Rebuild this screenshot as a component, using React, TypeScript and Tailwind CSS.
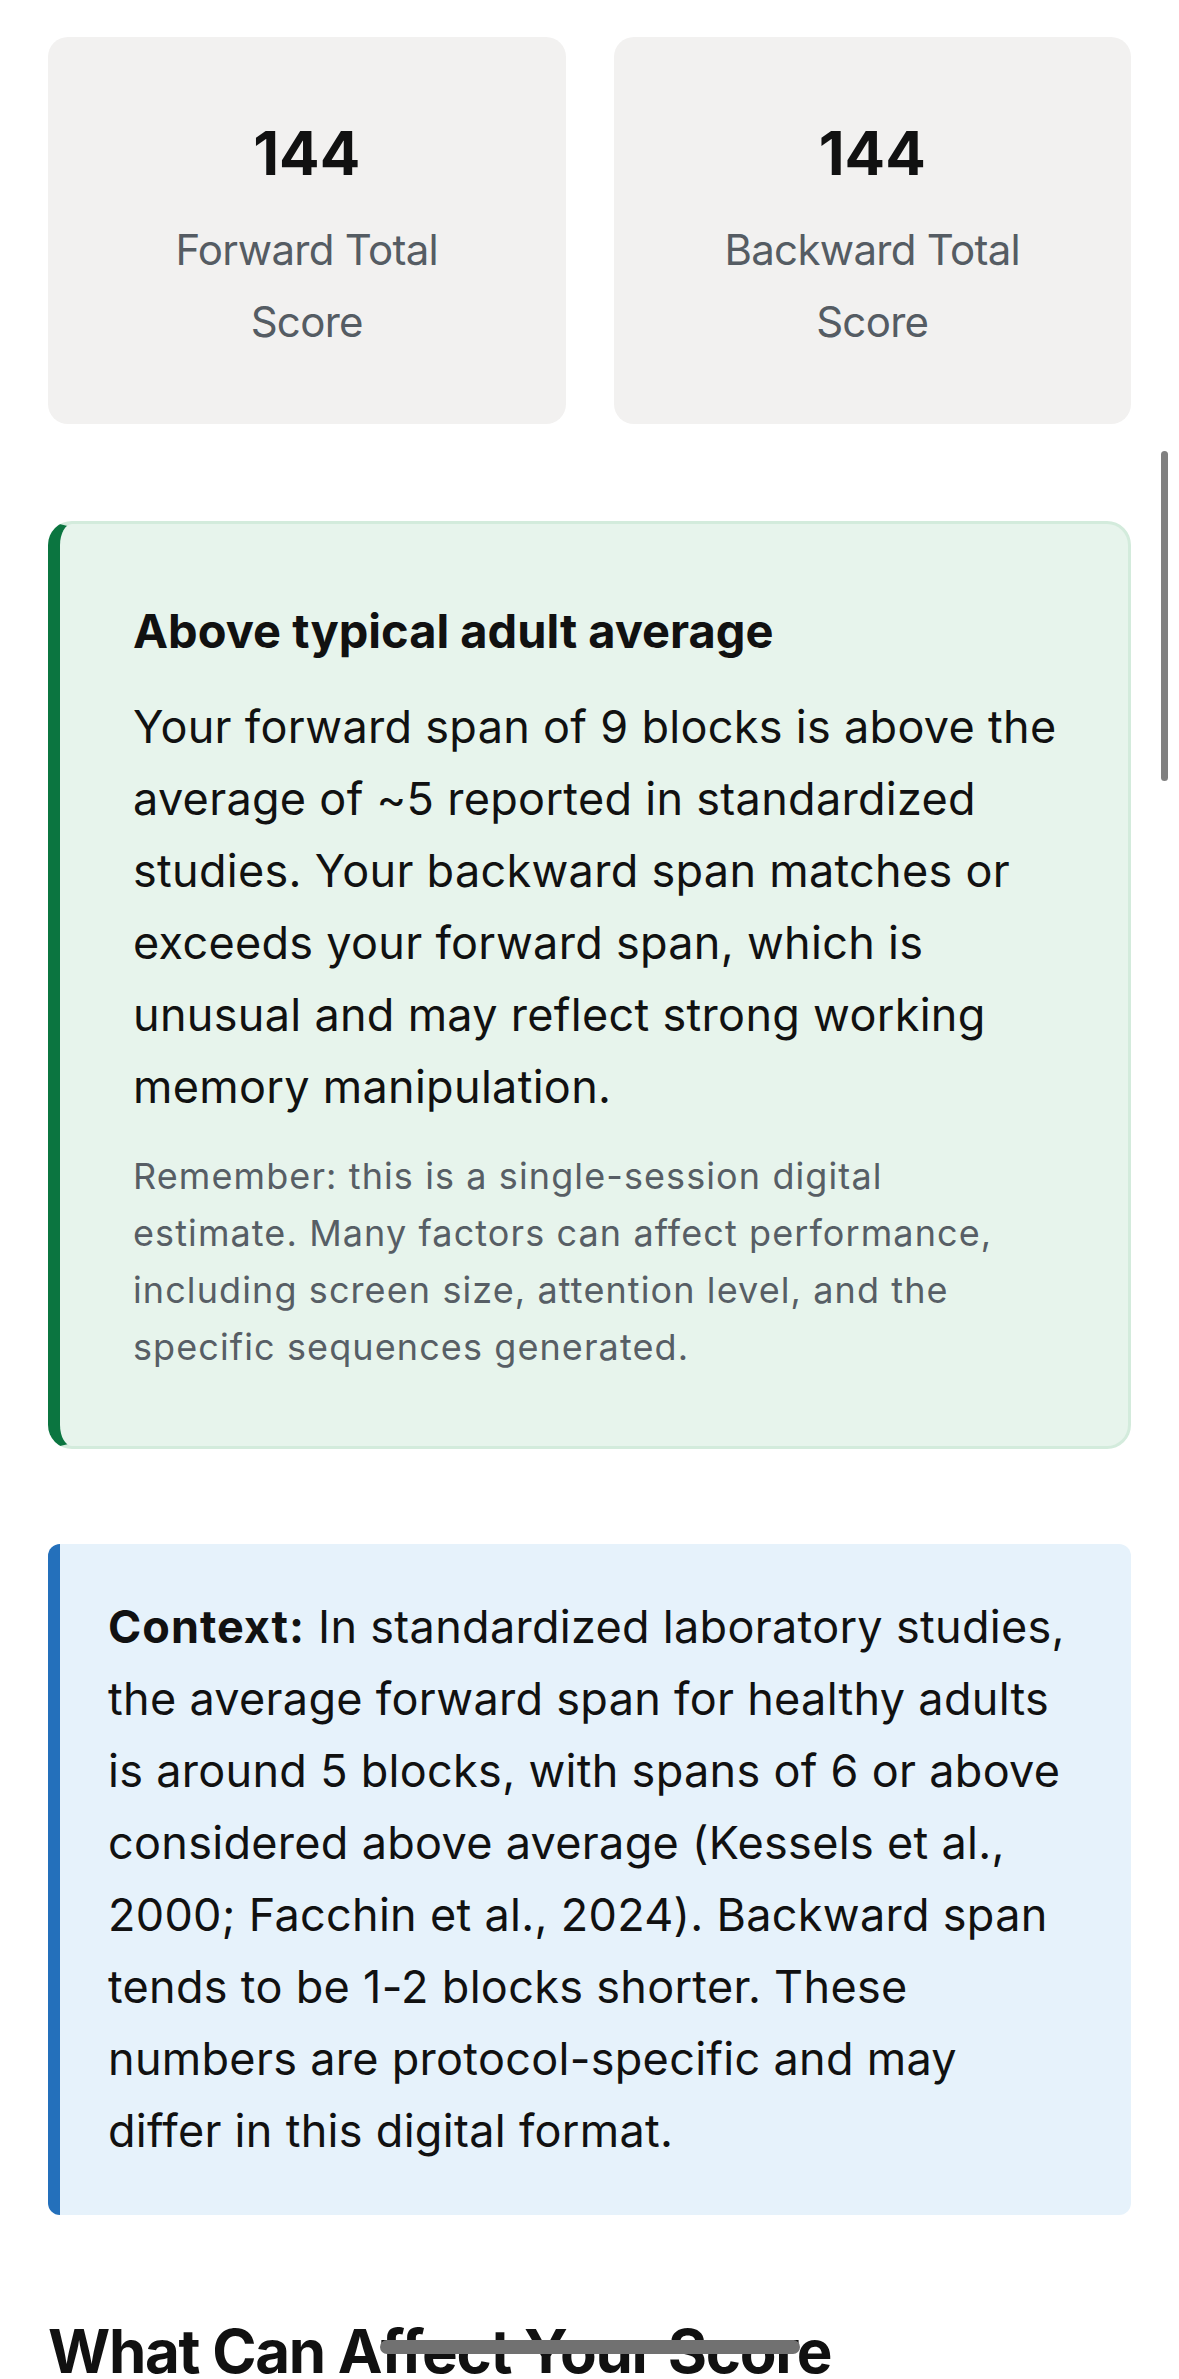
export default function App() {
  return (
    <div className="relative min-h-[2379px] overflow-hidden bg-white font-['Inter','Noto_Sans',sans-serif] text-[#111]">
      <div className="px-[48px] pt-[37px]">
        {/* Score cards */}
        <div className="grid grid-cols-2 gap-[48px]">
          <ScoreCard value="144" label="Forward Total Score" />
          <ScoreCard value="144" label="Backward Total Score" />
        </div>

        {/* Interpretation */}
        <div className="mt-[97px] rounded-[24px] border-[3px] border-l-[12px] border-[#d3ebdc] border-l-[#0b7540] bg-[#e7f4ec] pt-[74px] pb-[70px] pl-[73px] pr-[56px]">
          <h3 className="text-[47px] font-bold leading-[66px]">
            Above typical adult average
          </h3>
          <p className="mt-[27px] text-[45px] leading-[72px] tracking-[0.3px]">
            Your forward span of 9 blocks is above the average of ~5 reported
            in standardized studies. Your backward span matches or exceeds
            your forward span, which is unusual and may reflect strong working
            memory manipulation.
          </p>
          <p className="mt-[25px] mr-[46px] text-[36px] leading-[57px] tracking-[1.1px] text-[#575e65]">
            Remember: this is a single-session digital estimate. Many factors
            can affect performance, including screen size, attention level,
            and the specific sequences generated.
          </p>
        </div>

        {/* Context */}
        <div className="mt-[95px] rounded-[12px] border-l-[12px] border-[#2470bb] bg-[#e6f2fb] pt-[47px] pb-[48px] pl-[48px] pr-[58px]">
          <p className="text-[45px] leading-[72px] tracking-[0.3px]">
            <strong className="font-bold tracking-[1px]">Context:</strong> In
            standardized laboratory studies, the average forward span for
            healthy adults is around 5 blocks, with spans of 6 or above
            considered above average (Kessels et al., 2000; Facchin et al.,
            2024). Backward span tends to be 1-2 blocks shorter. These numbers
            are protocol-specific and may differ in this digital format.
          </p>
        </div>

        <h2 className="mt-[100px] text-[60px] font-bold leading-[72px] tracking-[-1.3px]">
          What Can Affect Your Score
        </h2>
      </div>

      {/* Scroll indicator */}
      <div className="absolute right-[11px] top-[451px] h-[330px] w-[7px] rounded-full bg-[#808080]" />

      {/* Home indicator */}
      <div className="absolute left-[380px] top-[2340px] h-[14px] w-[420px] rounded-full bg-[#717171]" />
      <div className="absolute inset-x-0 bottom-0 h-[5px] bg-[#f3f3f3]" />
    </div>
  );
}

function ScoreCard({ value, label }: { value: string; label: string }) {
  return (
    <div className="flex flex-col items-center rounded-[20px] bg-[#f2f1f0] px-[90px] pt-[80px] pb-[66px] text-center">
      <div className="text-[60px] font-bold leading-[72px]">{value}</div>
      <div className="mt-[25px] text-[42px] leading-[72px] tracking-[-0.7px] text-[#555c63]">
        {label}
      </div>
    </div>
  );
}
